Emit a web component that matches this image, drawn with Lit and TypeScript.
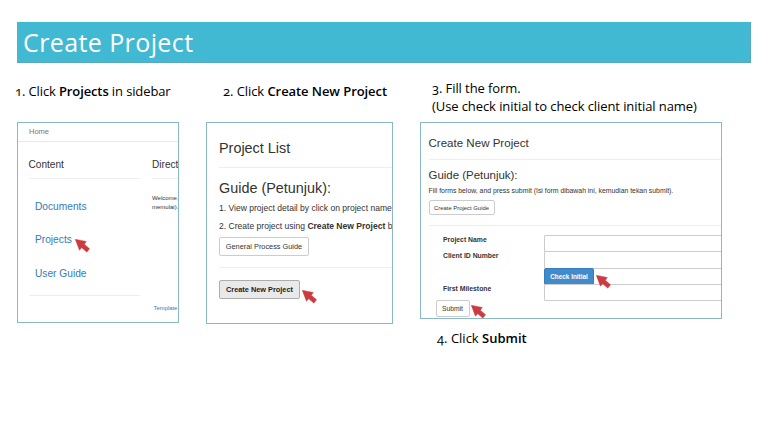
import { LitElement, html, css } from "lit";
import { customElement } from "lit/decorators.js";

@customElement("pointer-arrow")
class PointerArrow extends LitElement {
  static styles = css`
    :host { display: block; width: 15px; height: 14px; }
    svg { display: block; }
    polygon { fill: #cf3a3f; stroke: #b5484b; stroke-width: 0.4; }
  `;
  render() {
    return html`<svg width="15" height="14" viewBox="0 0 15 14">
      <polygon points="0.2,0.2 11.4,2.4 9.4,5.2 14.6,9.8 11.8,13.2 6.8,8.8 4.4,11.2" />
    </svg>`;
  }
}

@customElement("app-root")
class AppRoot extends LitElement {
  static styles = css`
    :host {
      display: block;
      width: 768px;
      height: 432px;
      box-sizing: border-box;
      padding: 22px 17px 0;
      overflow: hidden;
      background: #fff;
      color: #333;
      font-family: "Liberation Sans", Arial, sans-serif;
      white-space: nowrap;
    }
    * { box-sizing: border-box; }
    .title {
      height: 41px;
      margin: 0;
      padding-left: 6px;
      background: #41b9d3;
      border: 1px solid #55a9bb;
      border-width: 0 1px 1px 0;
      color: #fff;
      font: 25px/40px "Open Sans", sans-serif;
      letter-spacing: 0.4px;
    }
    .steps { display: flex; align-items: flex-start; }
    .first { width: 162px; margin-right: 27px; }
    .second { width: 187px; margin-right: 27px; }
    .third { width: 302px; }
    .caption {
      height: 59px;
      padding-top: 19px;
      color: #000;
      font: 13px/18px "Open Sans", sans-serif;
      font-variant-numeric: oldstyle-nums;
    }
    .caption b { font-weight: 600; }
    .first .caption { margin-left: -2px; letter-spacing: -0.12px; }
    .second .caption { padding-left: 17px; letter-spacing: -0.07px; }
    .third .caption { padding: 16px 0 0 12px; letter-spacing: -0.09px; }
    .third .below { height: auto; padding: 10px 0 0 17px; letter-spacing: 0; }
    .panel {
      position: relative;
      overflow: hidden;
      border: 1px solid #88bac6;
      background: #fff;
    }
    h2, h3, p { margin: 0; font-weight: 400; }
    .rule { height: 1px; background: #eee; }
    .btn {
      display: block;
      width: max-content;
      border: 1px solid #ccc;
      border-radius: 2px;
      background: #fff;
      text-align: center;
    }
    pointer-arrow { position: absolute; }

    .home { height: 201px; }
    .nav {
      height: 19px;
      padding-left: 11px;
      border-bottom: 1px solid #e9e9e9;
      color: #777;
      font-size: 7.5px;
      line-height: 18px;
    }
    .columns { display: grid; grid-template-columns: 111px 60px; gap: 12.5px; padding: 12px 0 0 10.5px; }
    .columns h3 {
      height: 25px;
      border-bottom: 1px solid #eee;
      font-size: 10.1px;
      line-height: 21px;
    }
    .links { margin-top: 11px; padding-left: 6.5px; color: #337ab7; font-size: 10.2px; line-height: 33.3px; }
    .home .rule { margin-top: 5px; }
    .welcome { margin-top: 15px; font-size: 6px; line-height: 8.5px; }
    .credit { margin: 92.5px 0 0 1.5px; color: #337ab7; font-size: 5.9px; line-height: 8px; }
    .at-projects { left: 57px; top: 116px; }

    .list { height: 202px; padding: 15px 0 0 12px; }
    .list h2, .list h3 { font-size: 14.4px; line-height: 20px; }
    .list h3 { margin: 10px 0 1px; }
    .list h2 + .rule { margin-top: 9px; }
    .list p { font-size: 8.55px; line-height: 18px; }
    .list .btn { height: 19px; width: 90px; margin: 2px 0 11px; font-size: 7.35px; line-height: 17px; }
    .list .create { width: 81px; margin-top: 12px; border-color: #adadad; background: #e9e9e9; color: #222; font-weight: 700; }
    .at-create { left: 94.5px; top: 167px; }

    .form { height: 197px; padding: 12px 0 0 7.5px; }
    .form h2 { font-size: 11.55px; line-height: 16px; }
    .form h3 { margin-top: 7px; font-size: 11.45px; line-height: 16px; }
    .form h2 + .rule { margin-top: 8px; }
    .form p { margin: 3px 0 4px; font-size: 6.87px; line-height: 10px; }
    .form .guide { width: 66px; height: 15px; margin-bottom: 10px; font-size: 5.9px; line-height: 14px; }
    .fields {
      display: grid;
      grid-template-columns: 101px 1fr;
      grid-auto-rows: 16.25px;
      margin-top: 9px;
      padding-left: 14.5px;
      font-size: 6.85px;
      font-weight: 700;
      line-height: 9px;
    }
    .input { height: 17.25px; border: 1px solid #ccc; border-right: 0; border-radius: 2px 0 0 2px; }
    .check {
      width: 50px;
      height: 17px;
      border-color: #357ebd;
      background: #428bca;
      color: #fff;
      font-size: 6.4px;
      line-height: 15px;
    }
    .form .submit { width: 34px; height: 17px; margin-left: 7px; font-size: 6.75px; line-height: 15px; }
    .at-check { left: 175px; top: 152px; }
    .at-submit { left: 50px; top: 182px; }
  `;

  render() {
    return html`
      <h1 class="title">Create Project</h1>
      <div class="steps">
        <section class="first">
          <div class="caption">1. Click <b>Projects</b> in sidebar</div>
          <div class="panel home">
            <div class="nav">Home</div>
            <div class="columns">
              <div>
                <h3>Content</h3>
                <div class="links">
                  <div>Documents</div>
                  <div>Projects</div>
                  <div>User Guide</div>
                </div>
                <div class="rule"></div>
              </div>
              <div>
                <h3>Direct</h3>
                <div class="welcome">Welcome,<br />memulai).</div>
                <div class="credit">Template</div>
              </div>
            </div>
            <pointer-arrow class="at-projects"></pointer-arrow>
          </div>
        </section>

        <section class="second">
          <div class="caption">2. Click <b>Create New Project</b></div>
          <div class="panel list">
            <h2>Project List</h2>
            <div class="rule"></div>
            <h3>Guide (Petunjuk):</h3>
            <p>1. View project detail by click on project name</p>
            <p>2. Create project using <b>Create New Project</b> b</p>
            <span class="btn">General Process Guide</span>
            <div class="rule"></div>
            <span class="btn create">Create New Project</span>
            <pointer-arrow class="at-create"></pointer-arrow>
          </div>
        </section>

        <section class="third">
          <div class="caption">3. Fill the form.<br />(Use check initial to check client initial name)</div>
          <div class="panel form">
            <h2>Create New Project</h2>
            <div class="rule"></div>
            <h3>Guide (Petunjuk):</h3>
            <p>Fill forms below, and press submit (Isi form dibawah ini, kemudian tekan submit).</p>
            <span class="btn guide">Create Project Guide</span>
            <div class="rule"></div>
            <div class="fields">
              <span>Project Name</span><div class="input"></div>
              <span>Client ID Number</span><div class="input"></div>
              <span></span><span class="btn check">Check Initial</span>
              <span>First Milestone</span><div class="input"></div>
            </div>
            <span class="btn submit">Submit</span>
            <pointer-arrow class="at-check"></pointer-arrow>
            <pointer-arrow class="at-submit"></pointer-arrow>
          </div>
          <div class="caption below">4. Click <b>Submit</b></div>
        </section>
      </div>
    `;
  }
}
